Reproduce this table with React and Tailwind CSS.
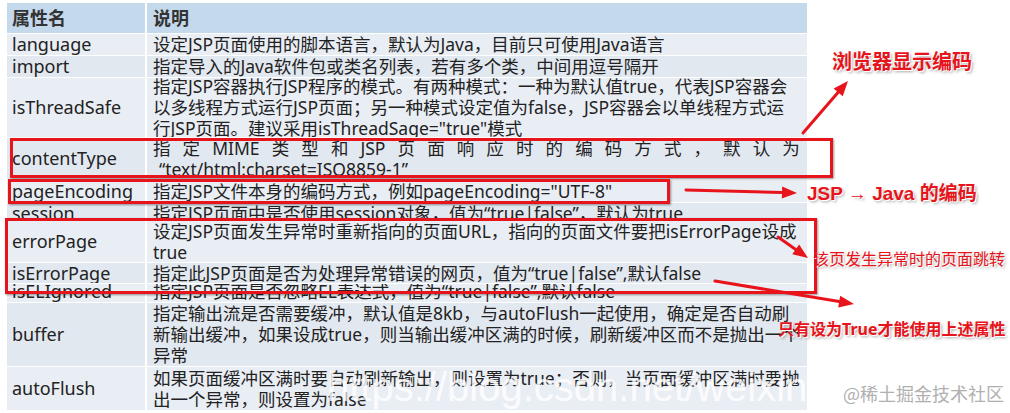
import React from "react";

const rows = [
  { name: "language", h: "h-[21px]", lines: ["设定JSP页面使用的脚本语言，默认为Java，目前只可使用Java语言"] },
  { name: "import", h: "h-[21px]", lines: ["指定导入的Java软件包或类名列表，若有多个类，中间用逗号隔开"] },
  {
    name: "isThreadSafe",
    h: "h-[59px]",
    lines: [
      "指定JSP容器执行JSP程序的模式。有两种模式：一种为默认值true，代表JSP容器会",
      "以多线程方式运行JSP页面；另一种模式设定值为false，JSP容器会以单线程方式运",
      "行JSP页面。建议采用isThreadSage=\"true\"模式",
    ],
  },
  { name: "contentType", h: "h-[41px]", spread: true },
  { name: "pageEncoding", h: "h-[22px]", lines: ["指定JSP文件本身的编码方式，例如pageEncoding=\"UTF-8\""] },
  { name: "session", h: "h-[17px]", clip: "top", lines: ["指定JSP页面中是否使用session对象，值为“true|false”，默认为true"] },
  {
    name: "errorPage",
    h: "h-[41px]",
    lines: ["设定JSP页面发生异常时重新指向的页面URL，指向的页面文件要把isErrorPage设成", "true"],
  },
  { name: "isErrorPage", h: "h-[20px]", lines: ["指定此JSP页面是否为处理异常错误的网页，值为“true|false”,默认false"] },
  { name: "isELIgnored", h: "h-[18px]", clip: "bottom", lines: ["指定JSP页面是否忽略EL表达式，值为“true|false”,默认false"] },
  {
    name: "buffer",
    h: "h-[63px]",
    lines: [
      "指定输出流是否需要缓冲，默认值是8kb，与autoFlush一起使用，确定是否自动刷",
      "新输出缓冲，如果设成true，则当输出缓冲区满的时候，刷新缓冲区而不是抛出一个",
      "异常",
    ],
  },
  {
    name: "autoFlush",
    h: "h-[43px]",
    lines: ["如果页面缓冲区满时要自动刷新输出，则设置为true；否则，当页面缓冲区满时要抛", "出一个异常，则设置为false"],
  },
];

const spreadTokens = "指 定 MIME 类 型 和 JSP 页 面 响 应 时 的 编 码 方 式 ， 默 认 为".split(" ");

function Row({ row, index }) {
  const bg = index % 2 === 0 ? "bg-[#e9edf4]" : "bg-[#e2e8f0]";
  const align = row.clip === "top" ? "items-start" : row.clip === "bottom" ? "items-end" : "items-center";
  const just = row.clip === "top" ? "justify-start" : row.clip === "bottom" ? "justify-end" : "justify-center";
  return (
    <div className={`flex gap-[2px] ${row.h} overflow-hidden`}>
      <div className={`w-[138px] shrink-0 ${bg} flex ${align} pl-[5px] text-[18px] leading-[21px] text-[#222]`}>
        {row.name}
      </div>
      <div className={`flex-1 ${bg} flex flex-col ${just} pl-[6px] pr-[7px] text-[17.5px] leading-[21px] text-[#222] whitespace-nowrap`}>
        {row.spread ? (
          <>
            <div className="flex justify-between">
              {spreadTokens.map((t, i) => (
                <span key={i}>{t}</span>
              ))}
            </div>
            <div className="pl-[6px]">“text/html:charset=ISO8859-1”</div>
          </>
        ) : (
          row.lines.map((l, i) => <div key={i}>{l}</div>)
        )}
      </div>
    </div>
  );
}

function Arrow({ x1, y1, x2, y2 }) {
  const a = Math.atan2(y2 - y1, x2 - x1);
  const len = 15;
  const w = 6;
  const bx = x2 - len * Math.cos(a);
  const by = y2 - len * Math.sin(a);
  const px = -Math.sin(a) * w;
  const py = Math.cos(a) * w;
  return (
    <g>
      <line x1={x1} y1={y1} x2={bx} y2={by} stroke="#e8141c" strokeWidth="3" strokeLinecap="round" />
      <polygon points={`${x2},${y2} ${bx + px},${by + py} ${bx - px},${by - py}`} fill="#e8141c" />
    </g>
  );
}

const label = "absolute whitespace-nowrap font-bold text-[#e8141c] [text-shadow:1px_1px_0_#fff,2px_2px_3px_rgba(0,0,0,0.35)]";

export default function App() {
  return (
    <div
      className="relative w-[1010px] h-[413px] bg-white overflow-hidden pt-[3px] pl-[7px]"
      style={{ fontFamily: '"Noto Sans", "Noto Sans CJK SC", sans-serif' }}
    >
      <div className="w-[800px] flex flex-col gap-[1px]">
        <div className="flex gap-[2px] h-[30px]">
          <div className="w-[138px] shrink-0 bg-[#c5d9ed] flex items-center pl-[5px] text-[18px] font-bold text-[#333]">
            属性名
          </div>
          <div className="flex-1 bg-[#c5d9ed] flex items-center pl-[6px] text-[18px] font-bold text-[#333]">
            说明
          </div>
        </div>
        {rows.map((r, i) => (
          <Row key={r.name} row={r} index={i} />
        ))}
      </div>

      {/* watermark */}
      <div
        className="absolute left-[327px] top-[367px] text-[40px] leading-[40px] text-white/80 whitespace-nowrap"
        style={{ fontFamily: '"Liberation Sans", sans-serif' }}
      >
        https://blog.csdn.net/weixin
      </div>

      {/* red boxes */}
      <div className="absolute left-[10px] top-[138px] w-[823px] h-[40px] border-[3px] border-[#e8141c] shadow-[1px_1px_2px_rgba(0,0,0,0.4)]" />
      <div className="absolute left-[8px] top-[179px] w-[662px] h-[25px] border-[3px] border-[#e8141c] shadow-[1px_1px_2px_rgba(0,0,0,0.4)]" />
      <div className="absolute left-[5px] top-[218px] w-[812px] h-[76px] border-[3px] border-[#e8141c] shadow-[1px_1px_2px_rgba(0,0,0,0.4)]" />

      <svg className="absolute left-0 top-0" width="1010" height="413">
        <Arrow x1={803} y1={133} x2={848} y2={81} />
        <Arrow x1={686} y1={190} x2={797} y2={193} />
        <Arrow x1={778} y1={237} x2={808} y2={258} />
        <Arrow x1={715} y1={281} x2={854} y2={304} />
      </svg>

      <div className={`${label} left-[832px] top-[50px] text-[20px] leading-[24px]`}>浏览器显示编码</div>
      <div className={`${label} left-[807px] top-[182px] text-[19px] leading-[24px]`} style={{ fontFamily: '"Liberation Sans", "Noto Sans CJK SC", sans-serif' }}>
        JSP → Java 的编码
      </div>
      <div className={`${label} left-[813px] top-[249px] text-[16px] leading-[20px] font-normal`}>该页发生异常时的页面跳转</div>
      <div className={`${label} left-[778px] top-[319px] text-[16px] leading-[20px]`}>只有设为True才能使用上述属性</div>

      <div className="absolute left-[843px] top-[382px] text-[18px] leading-[22px] text-[#b0b0b0] whitespace-nowrap" style={{ fontFamily: '"Noto Sans CJK SC", sans-serif' }}>
        @稀土掘金技术社区
      </div>
    </div>
  );
}
